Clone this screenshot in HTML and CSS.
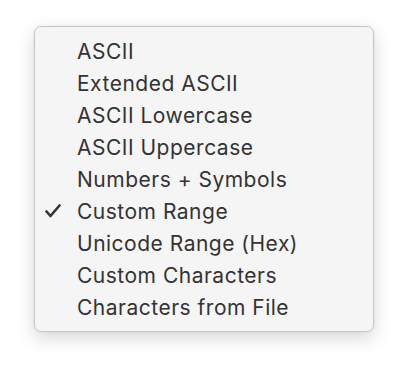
FILE: index.html
```html
<html>
<head>
    <title>Character set</title>
    <link rel="stylesheet" href="styles.css">
</head>
<body>
<div class="menu">
    <div class="item"><span class="mark"></span><span>ASCII</span></div>
    <div class="item"><span class="mark"></span><span>Extended ASCII</span></div>
    <div class="item"><span class="mark"></span><span>ASCII Lowercase</span></div>
    <div class="item"><span class="mark"></span><span>ASCII Uppercase</span></div>
    <div class="item"><span class="mark"></span><span>Numbers + Symbols</span></div>
    <div class="item checked">
        <span class="mark">
            <svg width="16" height="14" viewBox="0 0 16 14">
                <path d="M1.5 7.5 L5.5 12 L14.5 1.5" fill="none" stroke="#333" stroke-width="2.6" stroke-linecap="round" stroke-linejoin="round"/>
            </svg>
        </span>
        <span>Custom Range</span>
    </div>
    <div class="item"><span class="mark"></span><span>Unicode Range (Hex)</span></div>
    <div class="item"><span class="mark"></span><span>Custom Characters</span></div>
    <div class="item"><span class="mark"></span><span>Characters from File</span></div>
</div>
</body>
</html>
```

FILE: styles.css
```css
body {
  margin: 0;
  background: #fff;
  font-family: Inter, "Liberation Sans", sans-serif;
}

.menu {
  margin: 26px 0 0 34px;
  width: 340px;
  box-sizing: border-box;
  padding: 8px 0;
  background: #f5f5f5;
  border: 1px solid #c6c6c6;
  border-radius: 7px;
  box-shadow: 0 6px 18px rgba(0, 0, 0, 0.16), 0 0 2px rgba(0, 0, 0, 0.08);
}

.item {
  display: flex;
  align-items: center;
  height: 32px;
  font-size: 21px;
  letter-spacing: 0.5px;
  color: #333;
}

.mark {
  width: 42px;
  flex: none;
  display: flex;
  padding-left: 10px;
  box-sizing: border-box;
}
```
